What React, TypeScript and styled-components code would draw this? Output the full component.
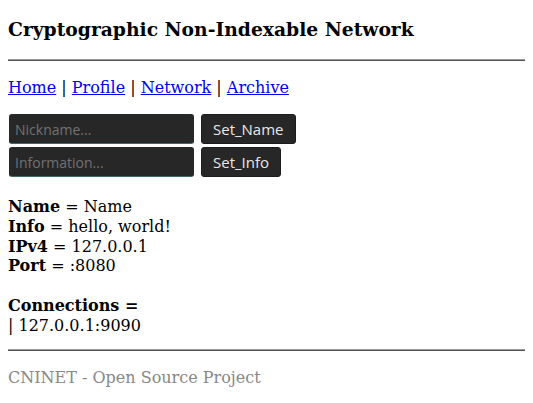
import React from "react";
import styled, { createGlobalStyle } from "styled-components";

const Global = createGlobalStyle`
  body {
    margin: 8px;
    font-family: "DejaVu Serif", serif;
    font-size: 16px;
    color: #000;
    background: #fff;
  }
`;

const Title = styled.h3`
  font-size: 18.72px;
  font-weight: bold;
  margin: 10px 0 19px;
`;

const Rule = styled.hr<{ $top?: number }>`
  border: none;
  border-top: 1px solid #999;
  border-bottom: 1px solid #555;
  height: 0;
  margin: ${(p) => p.$top ?? 8}px 0 8px;
  background: #666;
`;

const Nav = styled.nav`
  margin: 17px 0;
`;

const NavLink = styled.a`
  color: #0000ee;
  text-decoration: underline;
`;

const Form = styled.div`
  display: flex;
  flex-direction: column;
  gap: 3px;
  margin-bottom: 20px;
`;

const FormRow = styled.div`
  display: flex;
  align-items: stretch;
  gap: 7px;
`;

const Field = styled.input`
  width: 185px;
  height: 30px;
  box-sizing: border-box;
  background: #272727;
  border: 1px solid #242a2a;
  border-bottom-color: #3f6a6a;
  border-radius: 3px;
  padding: 0 5px;
  color: #ddd;
  font-family: "Open Sans", sans-serif;
  font-size: 14px;
  margin-left: 1px;
  &::placeholder {
    color: #727272;
  }
`;

const Btn = styled.button`
  height: 30px;
  box-sizing: border-box;
  background: #272727;
  border: 1px solid #1c1c1c;
  border-radius: 3px;
  padding: 0 11px;
  color: #e8e8e8;
  font-family: "Open Sans", sans-serif;
  font-size: 15px;
`;

const Info = styled.div`
  line-height: 19.8px;
`;

const Spacer = styled.div`
  height: 19.8px;
`;

const Footer = styled.div`
  color: #888;
  margin-top: 17px;
`;

export default function App() {
  return (
    <>
      <Global />
      <Title>Cryptographic Non-Indexable Network</Title>
      <Rule />
      <Nav>
        <NavLink href="#">Home</NavLink> | <NavLink href="#">Profile</NavLink> |{" "}
        <NavLink href="#">Network</NavLink> | <NavLink href="#">Archive</NavLink>
      </Nav>
      <Form>
        <FormRow>
          <Field placeholder="Nickname..." />
          <Btn>Set_Name</Btn>
        </FormRow>
        <FormRow>
          <Field placeholder="Information..." />
          <Btn>Set_Info</Btn>
        </FormRow>
      </Form>
      <Info>
        <b>Name</b> = Name
        <br />
        <b>Info</b> = hello, world!
        <br />
        <b>IPv4</b> = 127.0.0.1
        <br />
        <b>Port</b> = :8080
        <Spacer />
        <b>Connections =</b>
        <br />| 127.0.0.1:9090
      </Info>
      <Rule $top={13} />
      <Footer>CNINET - Open Source Project</Footer>
    </>
  );
}
